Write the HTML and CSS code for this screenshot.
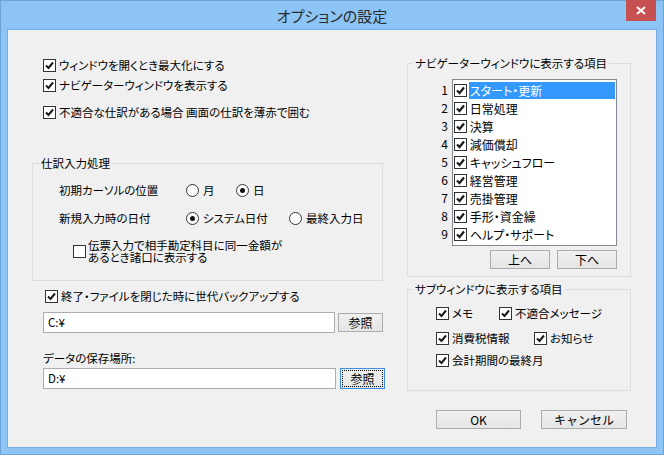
FILE: index.html
```html
<!DOCTYPE html>
<html lang="ja">
<head>
    <meta charset="UTF-8">
    <meta name="viewport" content="width=device-width, initial-scale=1.0">
    <link rel="stylesheet" href="styles.css">
    <title>オプションの設定</title>
</head>
<body>
    <div id="window">
        <div class="titlebar">
            <span class="title">オプションの設定</span>
            <div class="close">
                <svg width="10" height="9" viewBox="0 0 10 9"><path d="M1 1L9 8M9 1L1 8"/></svg>
            </div>
        </div>

        <div class="client">
            <div class="left">
                <div class="opt-row"><span class="cb"><svg viewBox="0 0 11 11"><path d="M2 5.5L4.5 8L9 2.5"/></svg></span>ウィンドウを開くとき最大化にする</div>
                <div class="opt-row"><span class="cb"><svg viewBox="0 0 11 11"><path d="M2 5.5L4.5 8L9 2.5"/></svg></span>ナビゲーターウィンドウを表示する</div>
                <div class="opt-row third"><span class="cb"><svg viewBox="0 0 11 11"><path d="M2 5.5L4.5 8L9 2.5"/></svg></span>不適合な仕訳がある場合 画面の仕訳を薄赤で囲む</div>

                <fieldset class="group entry">
                    <legend>仕訳入力処理</legend>
                    <div class="gbody">
                        <div class="grow">
                            <span class="lbl">初期カーソルの位置</span>
                            <span class="ropt w50"><span class="rb"></span>月</span>
                            <span class="ropt"><span class="rb on"></span>日</span>
                        </div>
                        <div class="grow second">
                            <span class="lbl">新規入力時の日付</span>
                            <span class="ropt w103"><span class="rb on"></span>システム日付</span>
                            <span class="ropt"><span class="rb"></span>最終入力日</span>
                        </div>
                        <div class="multi">
                            <span class="cb"></span>
                            <span>伝票入力で相手勘定科目に同一金額が<br>あるとき諸口に表示する</span>
                        </div>
                    </div>
                </fieldset>

                <div class="opt-row backup"><span class="cb"><svg viewBox="0 0 11 11"><path d="M2 5.5L4.5 8L9 2.5"/></svg></span>終了・ファイルを閉じた時に世代バックアップする</div>
                <div class="pathrow">
                    <div class="path">C:¥</div>
                    <button class="btn ref">参照</button>
                </div>
                <div class="datalabel">データの保存場所:</div>
                <div class="pathrow data">
                    <div class="path">D:¥</div>
                    <button class="btn ref focus">参照</button>
                </div>
            </div>

            <div class="right">
                <fieldset class="group nav">
                    <legend>ナビゲーターウィンドウに表示する項目</legend>
                    <div class="gbody">
                        <div class="navrow">
                            <div class="nums">
                                <div>1</div><div>2</div><div>3</div><div>4</div><div>5</div><div>6</div><div>7</div><div>8</div><div>9</div>
                            </div>
                            <div class="listbox">
                                <div class="item selected"><span class="cb lcb"><svg viewBox="0 0 11 11"><path d="M2 5.5L4.5 8L9 2.5"/></svg></span><span class="txt">スタート・更新</span></div>
                                <div class="item"><span class="cb lcb"><svg viewBox="0 0 11 11"><path d="M2 5.5L4.5 8L9 2.5"/></svg></span><span class="txt">日常処理</span></div>
                                <div class="item"><span class="cb lcb"><svg viewBox="0 0 11 11"><path d="M2 5.5L4.5 8L9 2.5"/></svg></span><span class="txt">決算</span></div>
                                <div class="item"><span class="cb lcb"><svg viewBox="0 0 11 11"><path d="M2 5.5L4.5 8L9 2.5"/></svg></span><span class="txt">減価償却</span></div>
                                <div class="item"><span class="cb lcb"><svg viewBox="0 0 11 11"><path d="M2 5.5L4.5 8L9 2.5"/></svg></span><span class="txt">キャッシュフロー</span></div>
                                <div class="item"><span class="cb lcb"><svg viewBox="0 0 11 11"><path d="M2 5.5L4.5 8L9 2.5"/></svg></span><span class="txt">経営管理</span></div>
                                <div class="item"><span class="cb lcb"><svg viewBox="0 0 11 11"><path d="M2 5.5L4.5 8L9 2.5"/></svg></span><span class="txt">売掛管理</span></div>
                                <div class="item"><span class="cb lcb"><svg viewBox="0 0 11 11"><path d="M2 5.5L4.5 8L9 2.5"/></svg></span><span class="txt">手形・資金繰</span></div>
                                <div class="item"><span class="cb lcb"><svg viewBox="0 0 11 11"><path d="M2 5.5L4.5 8L9 2.5"/></svg></span><span class="txt">ヘルプ・サポート</span></div>
                            </div>
                        </div>
                        <div class="movebtns">
                            <button class="btn move">上へ</button>
                            <button class="btn move">下へ</button>
                        </div>
                    </div>
                </fieldset>

                <fieldset class="group sub">
                    <legend>サブウィンドウに表示する項目</legend>
                    <div class="gbody">
                        <div class="srow">
                            <span class="sitem w63"><span class="cb"><svg viewBox="0 0 11 11"><path d="M2 5.5L4.5 8L9 2.5"/></svg></span>メモ</span>
                            <span class="sitem"><span class="cb"><svg viewBox="0 0 11 11"><path d="M2 5.5L4.5 8L9 2.5"/></svg></span>不適合メッセージ</span>
                        </div>
                        <div class="srow">
                            <span class="sitem w98"><span class="cb"><svg viewBox="0 0 11 11"><path d="M2 5.5L4.5 8L9 2.5"/></svg></span>消費税情報</span>
                            <span class="sitem"><span class="cb"><svg viewBox="0 0 11 11"><path d="M2 5.5L4.5 8L9 2.5"/></svg></span>お知らせ</span>
                        </div>
                        <div class="srow last">
                            <span class="sitem"><span class="cb"><svg viewBox="0 0 11 11"><path d="M2 5.5L4.5 8L9 2.5"/></svg></span>会計期間の最終月</span>
                        </div>
                    </div>
                </fieldset>

                <div class="footer">
                    <button class="btn ok">OK</button>
                    <button class="btn cancel">キャンセル</button>
                </div>
            </div>
        </div>
    </div>
</body>
</html>
```

FILE: styles.css
```css
body {
    margin: 0;
    font-family: "Noto Sans CJK JP", sans-serif;
    font-size: 11.5px;
    font-feature-settings: "palt";
    color: #000;
}

#window {
    width: 664px;
    height: 455px;
    box-sizing: border-box;
    background-color: #8cc5f5;
    border: 1px solid #6fa4d9;
    display: flex;
    flex-direction: column;
}

.titlebar {
    height: 28px;
    position: relative;
    display: flex;
    justify-content: center;
    align-items: center;
}

.title {
    font-size: 15px;
    color: #2b2b2b;
}

.close {
    position: absolute;
    top: -1px;
    right: 7px;
    width: 30px;
    height: 21px;
    background-color: #c75050;
    display: flex;
    justify-content: center;
    align-items: center;
}

.close path {
    stroke: #fff;
    stroke-width: 2;
    fill: none;
}

.client {
    flex: 1;
    margin: 0 6px 6px;
    border: 1px solid #78abe0;
    background-color: #f0f0f0;
    display: flex;
    padding-top: 25px;
}

.left {
    width: 399px;
}

.right {
    width: 224px;
}

/* checkboxes and radios */
.cb {
    width: 11px;
    height: 11px;
    border: 1px solid #333;
    background-color: #fff;
    margin-right: 3px;
    display: flex;
    flex: none;
}

.cb svg {
    width: 11px;
    height: 11px;
}

.cb path {
    fill: none;
    stroke: #1a1a1a;
    stroke-width: 2;
}

.rb {
    width: 11px;
    height: 11px;
    border: 1px solid #333;
    border-radius: 50%;
    background-color: #fff;
    margin-right: 4px;
    display: flex;
    justify-content: center;
    align-items: center;
    flex: none;
}

.rb.on::after {
    content: "";
    width: 5px;
    height: 5px;
    border-radius: 50%;
    background-color: #111;
}

.opt-row {
    display: flex;
    align-items: center;
    height: 20px;
    margin-left: 35px;
}

.opt-row.third {
    margin-top: 7px;
}

.opt-row.backup {
    margin-top: 5px;
    margin-left: 37px;
}

/* group boxes */
.group {
    margin: 0;
    padding: 0;
    min-width: 0;
    box-sizing: border-box;
    border: 1px solid #dcdcdc;
}

.group legend {
    padding: 0 2px;
    margin-left: 5px;
    line-height: 16px;
    white-space: nowrap;
}

.entry {
    width: 351px;
    margin: 33px 0 0 24px;
}

.entry legend {
    margin-left: 6px;
}

.entry .gbody {
    padding: 9px 0 17px 26px;
}

.grow {
    display: flex;
    align-items: center;
    height: 20px;
}

.grow.second {
    margin-top: 8px;
}

.lbl {
    width: 127px;
}

.ropt {
    display: flex;
    align-items: center;
}

.w50 { width: 50px; }
.w103 { width: 103px; }
.w63 { width: 63px; }
.w98 { width: 98px; }

.multi {
    display: flex;
    align-items: center;
    margin: 11px 0 0 14px;
    line-height: 12px;
}

.multi .cb {
    margin-right: 2px;
}

/* path inputs */
.pathrow {
    display: flex;
    align-items: center;
    margin: 6px 0 0 35px;
}

.pathrow.data {
    margin-top: 2px;
}

.path {
    box-sizing: border-box;
    width: 292px;
    height: 21px;
    border: 1px solid #abadb3;
    background-color: #fff;
    padding-left: 4px;
    line-height: 19px;
}

.pathrow.data .path {
    width: 293px;
}

.datalabel {
    margin: 17px 0 0 35px;
    line-height: 16px;
}

/* buttons */
.btn {
    box-sizing: border-box;
    height: 19px;
    padding: 0;
    border: 1px solid #acacac;
    background: linear-gradient(#f0f0f0, #e5e5e5);
    font-family: inherit;
    font-size: 12px;
    line-height: 17px;
    color: #000;
}

.btn.ref {
    width: 45px;
    margin-left: 3px;
}

.btn.focus {
    height: 21px;
    margin-left: 4px;
    border-color: #3c8fe0;
    outline: 1px dotted #000;
    outline-offset: -3px;
}

/* navigator list */
.nav .gbody {
    padding: 8px 13px 7px 0;
}

.navrow {
    display: flex;
    margin-left: 12px;
}

.nums {
    width: 28px;
    margin-right: 4px;
    padding-top: 2px;
    text-align: right;
    line-height: 18px;
    font-size: 12px;
}

.listbox {
    width: 166px;
    box-sizing: border-box;
    border: 1px solid #828790;
    background-color: #fff;
    padding: 1px 1px 2px 1px;
}

.item {
    display: flex;
    align-items: center;
    height: 18px;
    font-size: 12px;
}

.lcb {
    margin-right: 2px;
}

.lcb path {
    stroke-width: 2.2;
}

.txt {
    flex: 1;
    align-self: flex-end;
    height: 17px;
    line-height: 17px;
    padding-left: 1px;
}

.item.selected .txt {
    background-color: #3399ff;
    color: #fff;
}

.movebtns {
    display: flex;
    justify-content: flex-end;
    gap: 7px;
    margin-top: 4px;
}

.btn.move {
    width: 60px;
}

/* sub window group */
.sub {
    margin-top: 4px;
}

.sub .gbody {
    padding: 6px 0 20px 28px;
}

.srow {
    display: flex;
    align-items: center;
    height: 20px;
}

.srow + .srow {
    margin-top: 5px;
}

.srow.last {
    margin-top: 2px;
}

.sitem {
    display: flex;
    align-items: center;
}

.footer {
    display: flex;
    gap: 20px;
    margin: 19px 0 0 29px;
}

.btn.ok {
    width: 85px;
}

.btn.cancel {
    width: 86px;
}
```
